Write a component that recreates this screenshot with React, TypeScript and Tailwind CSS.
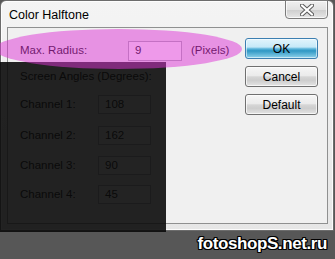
import { useState } from "react";

interface ChannelRow {
  label: string;
  value: string;
  gap: string;
}

const channels: ChannelRow[] = [
  { label: "Channel 1:", value: "108", gap: "mt-[12px]" },
  { label: "Channel 2:", value: "162", gap: "mt-[12px]" },
  { label: "Channel 3:", value: "90", gap: "mt-[11px]" },
  { label: "Channel 4:", value: "45", gap: "mt-[10px]" },
];

function CloseGlyph() {
  return (
    <svg width="14" height="12" viewBox="0 0 14 12">
      <path d="M2 1.5 L12 10.5 M12 1.5 L2 10.5" stroke="#5d5d5d" strokeWidth="4.2" strokeLinecap="round" />
      <path d="M2 1.5 L12 10.5 M12 1.5 L2 10.5" stroke="#ffffff" strokeWidth="2.2" strokeLinecap="round" />
    </svg>
  );
}

function DialogButton({ label, primary }: { label: string; primary?: boolean }) {
  return (
    <button
      className={
        primary
          ? "w-[73px] h-[21px] rounded-[3px] border border-[#3c7fb1] text-[12px] text-black bg-[linear-gradient(to_bottom,#e2f4fc_0%,#c6e9f8_42%,#5ab4da_52%,#2f97c4_62%,#8fd3ec_100%)] shadow-[inset_0_0_0_1px_rgba(255,255,255,0.55)]"
          : "w-[73px] h-[21px] rounded-[3px] border border-[#707070] text-[12px] text-black bg-[linear-gradient(to_bottom,#f6f6f6_0%,#ebebeb_45%,#d6d6d6_52%,#cdcdcd_70%,#e4e4e4_100%)] shadow-[inset_0_0_0_1px_rgba(255,255,255,0.7)]"
      }
    >
      {label}
    </button>
  );
}

export default function App() {
  const [radius] = useState("9");

  return (
    <div className="relative w-[335px] h-[259px] overflow-hidden bg-[#575757] font-['Liberation_Sans',Arial,sans-serif]">
      {/* Dialog window */}
      <div className="w-[334px] h-[231px] flex flex-col rounded-t-[6px] border border-[#6c6c6c] bg-[linear-gradient(to_bottom,#f4f4f4,#e6e6e6)] shadow-[inset_0_0_0_1px_rgba(255,255,255,0.8)]">
        <div className="h-[26px] flex items-start justify-between pl-[8px] pr-[5px]">
          <span className="mt-[6px] text-[12.5px] leading-[16px] text-black">Color Halftone</span>
          <div className="-mt-[1px] w-[43px] h-[19px] flex items-center justify-center rounded-b-[4px] border border-[#7b7b7b] bg-[linear-gradient(to_bottom,#f0f0f0_0%,#e2e2e2_50%,#cfcfcf_55%,#e6e6e6_100%)] shadow-[inset_0_0_0_1px_rgba(255,255,255,0.7)]">
            <CloseGlyph />
          </div>
        </div>

        <div className="flex-1 ml-[6px] mr-[5px] mb-[6px] border border-[#8f9090] bg-[#f0f0f0] flex text-[11.5px] text-black">
          {/* Settings */}
          <div className="flex-1 pl-[12px] pt-[13px]">
            <div className="flex items-center h-[20px]">
              <span className="w-[108px]">Max. Radius:</span>
              <div className="w-[54px] h-[20px] border border-[#abadb3] bg-white pl-[6px] flex items-center">{radius}</div>
              <span className="ml-[9px]">(Pixels)</span>
            </div>
            <div className="mt-[8px] leading-[14px]">Screen Angles (Degrees):</div>
            {channels.map((c) => (
              <div key={c.label} className={`${c.gap} flex items-center h-[19px]`}>
                <span className="w-[78px]">{c.label}</span>
                <div className="w-[53px] h-[19px] border border-[#abadb3] bg-white pl-[6px] flex items-center">{c.value}</div>
              </div>
            ))}
          </div>

          {/* Buttons */}
          <div className="flex flex-col gap-[7px] pt-[10px] pr-[9px]">
            <DialogButton label="OK" primary />
            <DialogButton label="Cancel" />
            <DialogButton label="Default" />
          </div>
        </div>
      </div>

      {/* Watermark */}
      <div className="pt-[3px] pr-[8px] text-right text-[17px] leading-[20px] font-bold tracking-[-0.4px] text-white [text-shadow:-1px_-1px_0_#000,1px_-1px_0_#000,-1px_1px_0_#000,1px_1px_0_#000,0_1px_0_#000,0_-1px_0_#000,1px_0_0_#000,-1px_0_0_#000]">
        fotoshopS.net.ru
      </div>

      {/* Dark overlay over the lower-left */}
      <div className="absolute left-0 top-[62px] w-[166px] h-[170px] bg-[rgba(11,11,11,0.9)]" />

      {/* Pink highlight ellipse */}
      <div className="absolute left-[-5px] top-[29px] w-[247px] h-[40px] rounded-[50%] bg-[rgba(222,52,214,0.5)]" />
    </div>
  );
}
